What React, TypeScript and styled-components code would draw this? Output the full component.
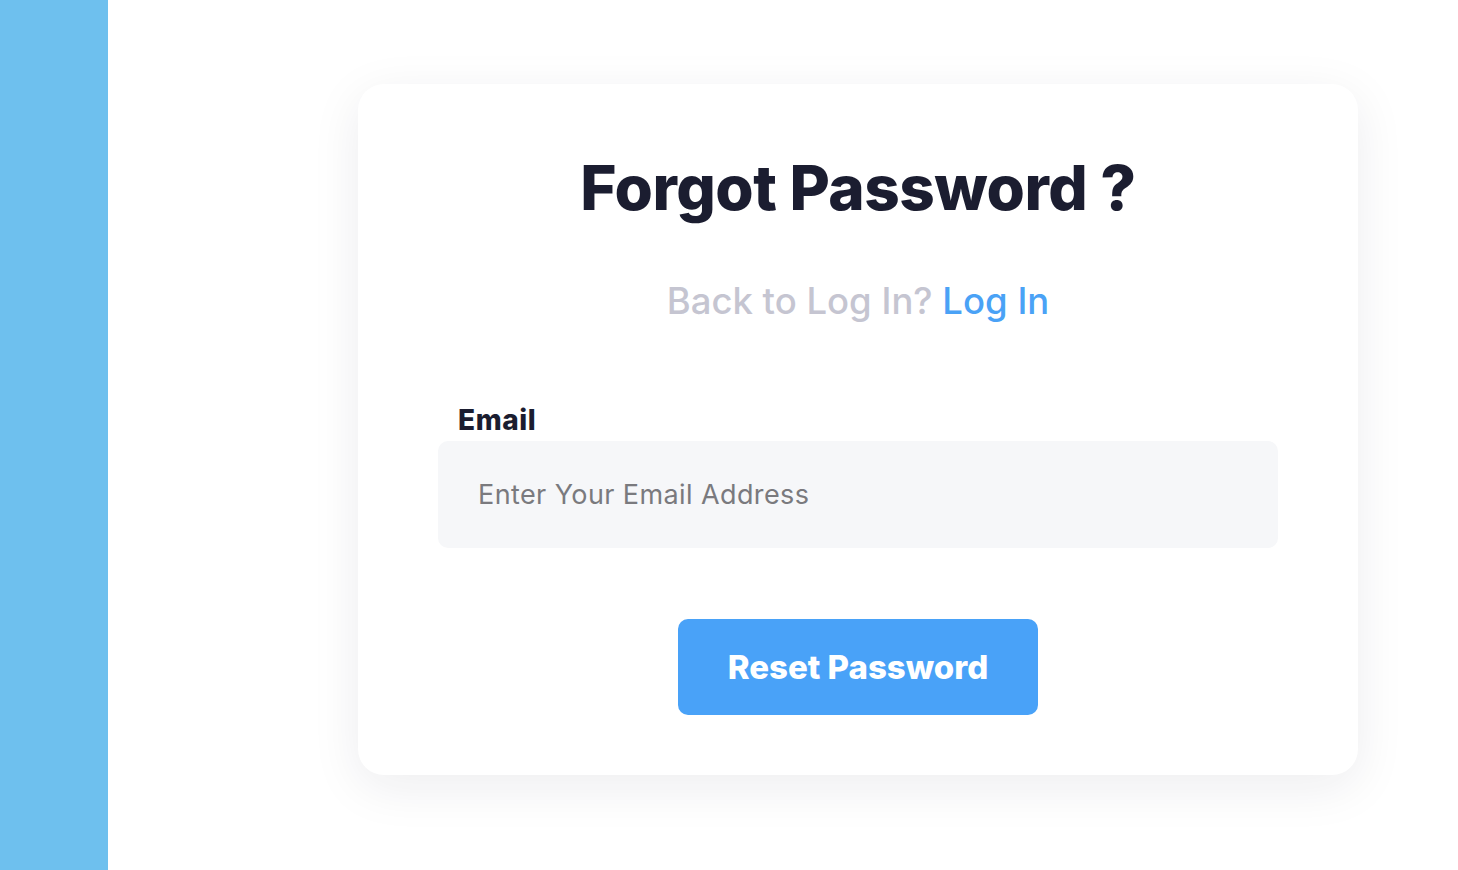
import React from "react"
import styled, { createGlobalStyle } from "styled-components"

const GlobalStyle = createGlobalStyle`
  html, body {
    margin: 0;
    padding: 0;
    background: #ffffff;
    font-family: Inter, "Open Sans", "Liberation Sans", sans-serif;
  }
  * {
    box-sizing: border-box;
  }
`

const App = () => {
  return (
    <>
      <GlobalStyle />
      <Page>
        <SideBar />
        <Main>
          <Card>
            <Title>Forgot Password ?</Title>
            <SubTitle>
              Back to Log In? <LoginLink href="#">Log In</LoginLink>
            </SubTitle>
            <Form onSubmit={(e) => e.preventDefault()}>
              <Label htmlFor="email">Email</Label>
              <Input id="email" type="email" placeholder="Enter Your Email Address" />
              <ResetButton type="submit">Reset Password</ResetButton>
            </Form>
          </Card>
        </Main>
      </Page>
    </>
  )
}

export default App

const Page = styled.div`
  display: flex;
  width: 100%;
  height: 870px;
  overflow: hidden;
`
const SideBar = styled.aside`
  width: 108px;
  flex-shrink: 0;
  background: #6ec0ee;
`
const Main = styled.main`
  flex: 1;
  padding: 84px 0 0 250px;
`
const Card = styled.div`
  width: 1000px;
  height: 691px;
  background: #ffffff;
  border-radius: 26px;
  box-shadow: 0 12px 50px rgba(20, 30, 50, 0.08);
  display: flex;
  flex-direction: column;
  align-items: center;
  padding: 66px 80px 60px;
`
const Title = styled.h1`
  margin: 0;
  font-size: 62px;
  line-height: 76px;
  font-weight: 800;
  color: #1b1d30;
  letter-spacing: -0.5px;
`
const SubTitle = styled.p`
  margin: 53px 0 0;
  font-size: 36.5px;
  line-height: 44px;
  font-weight: 500;
  color: #c5c5d1;
`
const LoginLink = styled.a`
  color: #4aa2f6;
  text-decoration: none;
`
const Form = styled.form`
  width: 100%;
  display: flex;
  flex-direction: column;
  align-items: center;
  margin-top: 80px;
`
const Label = styled.label`
  align-self: flex-start;
  padding-left: 20px;
  font-size: 28px;
  line-height: 34px;
  font-weight: 800;
  letter-spacing: 0.6px;
  color: #1b1d30;
`
const Input = styled.input`
  width: 100%;
  height: 107px;
  margin-top: 4px;
  border: none;
  outline: none;
  border-radius: 10px;
  background: #f6f7f9;
  padding: 0 40px;
  font-family: inherit;
  font-size: 27px;
  letter-spacing: 0.4px;
  color: #333;
  &::placeholder {
    color: #7a7a7e;
  }
`
const ResetButton = styled.button`
  margin-top: 71px;
  width: 360px;
  height: 96px;
  border: none;
  border-radius: 10px;
  background: #49a2f8;
  color: #ffffff;
  font-family: inherit;
  font-size: 33px;
  font-weight: 800;
  cursor: pointer;
`
